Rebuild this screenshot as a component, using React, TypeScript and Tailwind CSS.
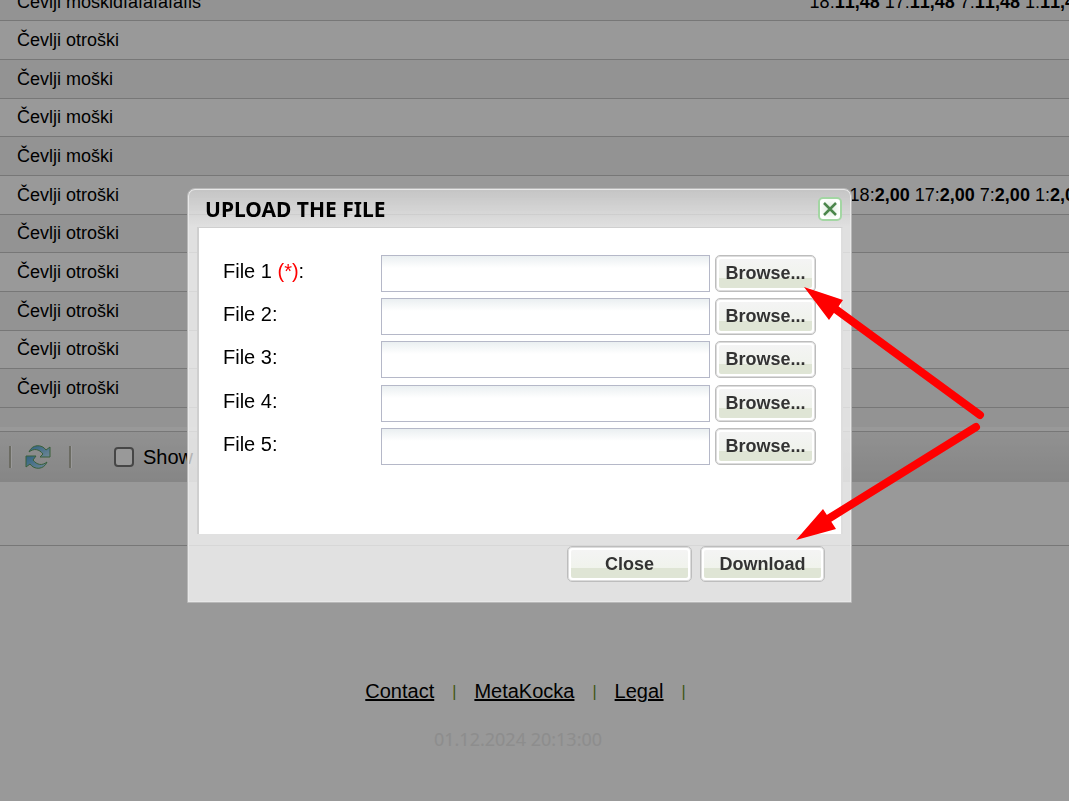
import React from 'react';
import clsx from 'clsx';

type Row = { name: string; stock?: [string, string][] };

const rows: Row[] = [
  {
    name: 'Čevlji moškidfafafafafis',
    stock: [['18', '11,48'], ['17', '11,48'], ['7', '11,48'], ['1', '11,48']],
  },
  { name: 'Čevlji otroški' },
  { name: 'Čevlji moški' },
  { name: 'Čevlji moški' },
  { name: 'Čevlji moški' },
  {
    name: 'Čevlji otroški',
    stock: [['18', '2,00'], ['17', '2,00'], ['7', '2,00'], ['1', '2,00']],
  },
  { name: 'Čevlji otroški' },
  { name: 'Čevlji otroški' },
  { name: 'Čevlji otroški' },
  { name: 'Čevlji otroški' },
  { name: 'Čevlji otroški' },
];

const files = [1, 2, 3, 4, 5];
const links = ['Contact', 'MetaKocka', 'Legal'];

const GlossButton: React.FC<{ label: string; className?: string }> = ({ label, className }) => (
  <button
    type="button"
    className={clsx(
      'rounded-[5px] border border-[#bdbdbd] bg-white p-[3px] text-[18px] leading-[28px] font-bold text-[#333] shadow-[inset_0_0_0_1px_#dcdcdc]',
      className,
    )}
  >
    <span className="block h-full rounded-[2px] bg-[linear-gradient(#f4f4f4,#f0f3ec_64%,#dfe5d5_64%,#dfe5d5)]">
      {label}
    </span>
  </button>
);

const RefreshIcon = () => (
  <svg className="size-[26px]" viewBox="0 0 26 26" strokeLinejoin="round">
    <defs>
      <linearGradient id="swoosh" x1="0" y1="0" x2="1" y2="1">
        <stop offset="0" stopColor="#4fa3d8" />
        <stop offset="1" stopColor="#b9e2fb" />
      </linearGradient>
    </defs>
    <g fill="url(#swoosh)" stroke="#5f9f60" strokeWidth="1">
      <path d="M4 8C7 0 17 0 21 6L25 3V13H15L18 10C14 5 9 4 4 8Z" />
      <path d="M22 18C19 26 9 26 5 20L1 23V12H11L8 16C12 21 17 22 22 18Z" />
    </g>
  </svg>
);

const ProductList = () => (
  <div className="overflow-hidden">
    <table className="-mt-[17px] h-[425px] w-[calc(100%+16px)] border-collapse text-[18px] leading-[20px] [font-kerning:none]">
      <tbody>
        {rows.map((row, i) => (
          <tr key={i} className={clsx('border-b border-[#c6c6c6]', i % 2 === 0 ? 'bg-[#f6f6f6]' : 'bg-white')}>
            <td className="p-0 pl-[17px]">{row.name}</td>
            <td className="p-0 text-right whitespace-nowrap">
              {row.stock?.map(([size, amount]) => (
                <span key={size}>
                  {size}:<b>{amount}</b>{' '}
                </span>
              ))}
            </td>
          </tr>
        ))}
      </tbody>
    </table>
  </div>
);

const Toolbar = () => (
  <div className="flex h-[51px] items-center border-t border-[#c6c6c6] bg-[linear-gradient(#f2f2f2,#dfdfdf)] text-[20px]">
    <span className="ml-[9px] h-[22px] w-[3px] border-l-2 border-[#b5b5a5] bg-white" />
    <button type="button" aria-label="Refresh" className="ml-[13px]">
      <RefreshIcon />
    </button>
    <span className="ml-[18px] h-[22px] w-[3px] border-l-2 border-[#b5b5a5] bg-white" />
    <label className="ml-[42px] flex items-center gap-[9px]">
      <input
        type="checkbox"
        className="size-5 appearance-none rounded-[4px] border-2 border-[#767676] bg-white"
      />
      Show
    </label>
  </div>
);

const Footer = () => (
  <footer className="flex flex-col items-center pt-[132px]">
    <nav className="flex items-center text-[20px] leading-[26px]">
      {links.map((link) => (
        <React.Fragment key={link}>
          <a href="#" className="underline">{link}</a>
          <span className="mx-[18px] pt-[2px] text-[16px] leading-[24px] text-[#6b8e23]">|</span>
        </React.Fragment>
      ))}
    </nav>
    <p className="mt-[23px] pr-[33px] font-['Noto_Sans',sans-serif] text-[18px] leading-[24px] text-[#ebebeb]">
      01.12.2024 20:13:00
    </p>
  </footer>
);

const Arrows = () => (
  <svg
    className="pointer-events-none absolute top-[91px] left-[607px] h-[270px] w-[200px]"
    viewBox="795 280 200 270"
    fill="#f00"
    stroke="#f00"
  >
    <path d="M980 415L834 308M976 427L828 519" strokeWidth="8" strokeLinecap="round" />
    <path d="M804 287L843 300L829 320ZM796 540L823 509L836 529Z" stroke="none" />
  </svg>
);

const UploadDialog = () => (
  <div
    role="dialog"
    aria-labelledby="upload-title"
    className="relative w-[665px] rounded-t-[8px] border border-[#b8b8b8] bg-white/70 bg-clip-padding pt-px pr-2 pb-5 pl-[9px] shadow-[inset_0_0_0_1px_#e8e8e8]"
  >
    <div className="-mr-[7px] -ml-2 flex h-[37px] items-center justify-between rounded-t-[6px] bg-[linear-gradient(#00000020,#00000000)] pr-2 pl-4">
      <h2 id="upload-title" className="font-['Noto_Sans',sans-serif] text-[21px] leading-[28px] font-bold">
        UPLOAD THE FILE
      </h2>
      <button
        type="button"
        aria-label="Close dialog"
        className="flex size-6 items-center justify-center rounded-[5px] border-2 border-[#a3d6a3] bg-[radial-gradient(#dcecdc,#fff_75%)]"
      >
        <svg className="size-4" viewBox="0 0 16 16" fill="none" stroke="#4b864b" strokeWidth="2.5">
          <path d="M2 2L14 14M14 2L2 14" />
        </svg>
      </button>
    </div>
    <form>
      <div className="h-[307px] border-x-2 border-t border-[#cfcfcf] border-r-[#dedede] bg-white pt-[27px] pr-[25px] pl-6">
        <div className="grid h-[216px] grid-rows-5">
          {files.map((n) => (
            <div key={n} className="flex items-start gap-[5px]">
              <label htmlFor={`file-${n}`} className="w-[153px] text-[20px] leading-[32px]">
                File {n}
                {n === 1 && <span className="text-[#f00]"> (*)</span>}:
              </label>
              <input
                id={`file-${n}`}
                type="text"
                className="h-[37px] min-w-0 flex-1 border border-[#b5b8c8] bg-[linear-gradient(#eaeff1,#fff_12px)] px-2 text-[18px]"
              />
              <GlossButton label="Browse..." className="h-[37px] w-[101px]" />
            </div>
          ))}
        </div>
      </div>
      <div className="mt-3 flex justify-end gap-2 pr-[18px]">
        <GlossButton label="Close" className="h-9 w-[125px]" />
        <GlossButton label="Download" className="h-9 w-[125px]" />
      </div>
    </form>
    <Arrows />
  </div>
);

const App: React.FC = () => {
  return (
    <div className="min-h-screen bg-white font-['Liberation_Sans',Arial,sans-serif] text-black">
      <ProductList />
      <div className="h-[23px] border-b-4 border-white bg-[#f6f6f6]" />
      <Toolbar />
      <div className="h-16 border-b border-[#c6c6c6]" />
      <Footer />

      {/* Dimmed backdrop with the dialog on top */}
      <div className="fixed inset-0 flex items-center justify-center bg-black/40 pr-[30px] pb-[10px]">
        <UploadDialog />
      </div>
    </div>
  );
};

export default App;
